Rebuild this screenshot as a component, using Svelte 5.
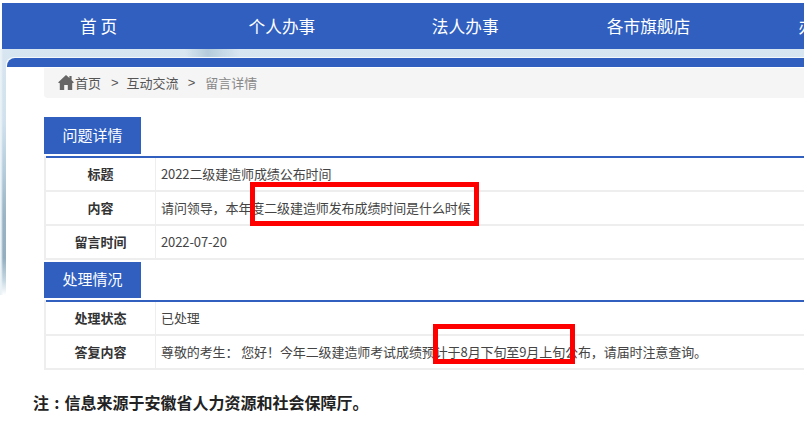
<script>
  const navItems = ['首 页', '个人办事', '法人办事', '各市旗舰店', '办事大厅']

  const detailRows = [
    { label: '标题', value: '2022二级建造师成绩公布时间' },
    { label: '内容', value: '请问领导，本年度二级建造师发布成绩时间是什么时候' },
    { label: '留言时间', value: '2022-07-20' },
  ]

  const replyRows = [
    { label: '处理状态', value: '已处理' },
    {
      label: '答复内容',
      value: '尊敬的考生： 您好！今年二级建造师考试成绩预计于8月下旬至9月上旬公布，请届时注意查询。',
    },
  ]
</script>

<div class="page">
  <nav class="nav">
    {#each navItems as item}
      <span class="nav-item">{item}</span>
    {/each}
  </nav>

  <div class="backdrop">
    <div class="panel">
      <div class="band"></div>
      <div class="content">
        <div class="crumbs">
          <svg class="home" viewBox="0 0 16 15" width="16" height="15" aria-hidden="true">
            <path d="M8 0 L11.4 3 L11.4 1 L13.6 1 L13.6 5 L16 7.4 L14.2 8.2 L14.2 15 L9.8 15 L9.8 10 L6.2 10 L6.2 15 L1.8 15 L1.8 8.2 L0 7.4 Z" fill="#666" />
          </svg>
          <span class="crumb">首页</span>
          <span class="sep">&gt;</span>
          <span class="crumb">互动交流</span>
          <span class="sep">&gt;</span>
          <span class="crumb current">留言详情</span>
        </div>

        <div class="tab first">问题详情</div>
        <table class="info">
          <tbody>
            {#each detailRows as row}
              <tr>
                <th>{row.label}</th>
                <td>{row.value}</td>
              </tr>
            {/each}
          </tbody>
        </table>

        <div class="tab second">处理情况</div>
        <table class="info">
          <tbody>
            {#each replyRows as row}
              <tr>
                <th>{row.label}</th>
                <td>{row.value}</td>
              </tr>
            {/each}
          </tbody>
        </table>
      </div>
    </div>
  </div>

  <p class="note">注 : 信息来源于安徽省人力资源和社会保障厅。</p>

  <div class="mark mark-question"></div>
  <div class="mark mark-answer"></div>
</div>

<style>
  :global(body) {
    margin: 0;
    background: #fff;
  }

  .page {
    position: relative;
    width: 804px;
    height: 424px;
    overflow: hidden;
    padding-top: 3px;
    box-sizing: border-box;
    font-family: "Noto Sans CJK SC", "Liberation Sans", sans-serif;
  }

  .nav {
    display: flex;
    height: 46px;
    margin-left: 2px;
    padding-left: 5px;
    background: #305fbf;
    white-space: nowrap;
    overflow: hidden;
  }

  .nav-item {
    flex: 0 0 183.3px;
    text-align: center;
    font-size: 16.7px;
    line-height: 46px;
    color: #fff;
  }

  .backdrop {
    padding: 8px 0 0 7px;
    background-repeat: no-repeat;
    background-size: 100% 8px, 7px 246px, 100% 246px;
    background-image:
      linear-gradient(90deg, transparent 185px, #b4cbdb 208px, #c4d8e6 222px, transparent 240px),
      linear-gradient(90deg, #eaf2f7 0, #eaf2f7 1px, transparent 3px),
      linear-gradient(180deg, #d8e6f1 0, #d0e1ed 30%, #b4ccdb 50%, #9ab4c5 68%, #93aebf 85%, #c5d7e2 94%, #fff 100%);
  }

  .panel {
    background: #fff;
    border-top: 1px solid #f4f8fb;
    border-left: 1px solid #fff;
    margin-left: -1px;
    border-top-left-radius: 8px;
  }

  .band {
    height: 9px;
    background: #305fbf;
    border-top-left-radius: 8px;
  }

  .content {
    padding: 1px 0 0 37px;
  }

  .crumbs {
    display: flex;
    align-items: center;
    height: 30px;
    padding: 0 0 2px 14px;
    box-sizing: border-box;
    background: #f5f5f5;
    border-bottom-left-radius: 4px;
    font-size: 13px;
    color: #555;
  }

  .home {
    margin: 1px 1px 0 0;
  }

  .sep {
    margin: 0 8px 0 10px;
    font-family: "Liberation Sans", sans-serif;
  }

  .sep + .crumb + .sep {
    margin-left: 9px;
    margin-right: 10px;
  }

  .crumb.current {
    color: #888;
  }

  .tab {
    width: 97px;
    height: 37px;
    line-height: 35px;
    text-align: center;
    font-size: 15px;
    color: #fff;
    background: #305fbf;
  }

  .tab.first {
    margin-top: 19px;
  }

  .tab.second {
    height: 36px;
    line-height: 34px;
    margin-top: 2px;
  }

  .info {
    width: 100%;
    margin-top: 2px;
    border-collapse: collapse;
    border-top: 2px solid #305fbf;
    font-size: 13px;
    color: #444;
  }

  .info th,
  .info td {
    height: 30px;
    padding: 0 0 2px;
    border: 2px solid #eee;
    border-top: 0;
    border-right: 0;
    font-weight: 400;
  }

  .info th {
    width: 109px;
    text-align: center;
    font-weight: 700;
    color: #333;
  }

  .info td {
    padding-left: 5px;
    border-left-width: 1px;
    letter-spacing: -0.1px;
  }

  .note {
    margin: 20px 0 0 33px;
    font-size: 16px;
    line-height: 24px;
    font-weight: 700;
    word-spacing: 1.5px;
    color: #222;
    white-space: nowrap;
  }

  .mark {
    position: absolute;
    box-sizing: border-box;
    border: 5px solid #f00;
  }

  .mark-question {
    left: 250px;
    top: 182px;
    width: 229px;
    height: 44px;
  }

  .mark-answer {
    left: 433px;
    top: 324px;
    width: 142px;
    height: 40px;
  }
</style>
